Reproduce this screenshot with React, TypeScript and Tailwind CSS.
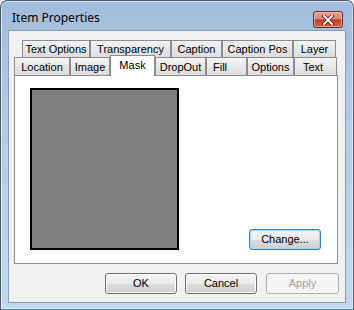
import React from "react";

type Tab = { label: string; w: string; selected?: boolean; pad?: string };

const backRow: Tab[] = [
  { label: "Text Options", w: "w-[68px]" },
  { label: "Transparency", w: "w-[81px]" },
  { label: "Caption", w: "w-[51px]" },
  { label: "Caption Pos", w: "w-[71px]" },
  { label: "Layer", w: "w-[43px]" },
];

const frontRow: Tab[] = [
  { label: "Location", w: "w-[56px]" },
  { label: "Image", w: "w-[40px]" },
  { label: "Mask", w: "w-[45px]", selected: true },
  { label: "DropOut", w: "w-[51px]" },
  { label: "Fill", w: "w-[41px]", pad: "justify-start pl-[6px]" },
  { label: "Options", w: "w-[47px]" },
  { label: "Text", w: "w-[43px]", pad: "justify-start pl-[8px]" },
];

function TabButton({ tab, h }: { tab: Tab; h: string }) {
  if (tab.selected) {
    return (
      <div
        className={`${tab.w} relative z-10 -mt-[2px] h-[21px] border border-b-0 border-[#898c95] bg-white flex items-start justify-center pt-[2px] text-[11px] leading-[14px] text-black`}
      >
        {tab.label}
      </div>
    );
  }
  return (
    <div
      className={`${tab.w} ${h} border border-b-0 border-[#898c95] bg-gradient-to-b from-[#f3f3f3] to-[#dcdcdc] flex items-center ${
        tab.pad ?? "justify-center"
      } text-[11px] leading-[14px] text-black`}
    >
      {tab.label}
    </div>
  );
}

function Button({
  label,
  w,
  focused,
  disabled,
}: {
  label: string;
  w: string;
  focused?: boolean;
  disabled?: boolean;
}) {
  if (disabled) {
    return (
      <div
        className={`${w} h-[21px] rounded-[3px] border border-[#adb2b5] bg-[#f4f4f4] flex items-center justify-center text-[11px] text-[#a0a0a0]`}
      >
        {label}
      </div>
    );
  }
  return (
    <div
      className={`${w} h-[21px] rounded-[3px] border ${
        focused ? "border-[#3c7fb1] shadow-[inset_0_0_0_1px_#9fd6f5]" : "border-[#707070] shadow-[inset_0_0_0_1px_#fbfbfb]"
      } bg-[linear-gradient(to_bottom,#f2f2f2_0%,#ebebeb_50%,#dddddd_50%,#cfcfcf_100%)] flex items-center justify-center text-[11px] text-black`}
    >
      {label}
    </div>
  );
}

export default function App() {
  return (
    <div className="w-[354px] h-[310px] font-['Liberation_Sans',Arial,sans-serif]">
      <div className="w-[354px] h-[310px] rounded-t-[7px] border border-[#4d5b6c] border-b-[#2f8f9c] bg-gradient-to-b from-[#a2bcdb] via-[#b8cfe9] to-[#c2d7ee] flex flex-col shadow-[inset_0_0_0_1px_rgba(255,255,255,0.5)]">
        {/* title bar */}
        <div className="h-[29px] flex items-center justify-between pl-[11px] pr-[10px]">
          <span className="text-[12px] pt-[5px] font-['Noto_Sans',sans-serif] text-black">Item Properties</span>
          <div className="mt-[8px] w-[30px] h-[17px] rounded-[3px] border border-[#6b2b2b] bg-[linear-gradient(to_bottom,#e8a493_0%,#d7826f_45%,#c2412c_55%,#d2624b_100%)] flex items-center justify-center shadow-[inset_0_0_0_1px_rgba(255,220,210,0.5)]">
            <svg width="12" height="10" viewBox="0 0 12 10">
              <path d="M2 1 L10 9 M10 1 L2 9" stroke="#5a1c14" strokeWidth="3.4" strokeLinecap="square" />
              <path d="M2 1 L10 9 M10 1 L2 9" stroke="#ffffff" strokeWidth="1.8" strokeLinecap="square" />
            </svg>
          </div>
        </div>

        {/* client area */}
        <div className="ml-[7px] w-[338px] h-[273px] bg-[#f0f0f0] border border-[#8a9db4] flex flex-col">
          <div className="pt-[9px] pl-[13px] flex">
            {backRow.map((t) => (
              <TabButton key={t.label} tab={t} h="h-[17px]" />
            ))}
          </div>
          <div className="pl-[5px] flex h-[18px]">
            {frontRow.map((t) => (
              <TabButton key={t.label} tab={t} h="h-[18px]" />
            ))}
          </div>
          <div className="ml-[5px] w-[324px] h-[189px] border border-[#898c95] bg-white flex">
            <div className="mt-[12px] ml-[15px] w-[149px] h-[162px] border-2 border-black bg-[#808080]" />
            <div className="self-end mb-[13px] ml-[70px]">
              <Button label="Change..." w="w-[72px]" focused />
            </div>
          </div>
          <div className="mt-[9px] flex pl-[96px]">
            <Button label="OK" w="w-[72px]" />
            <div className="ml-[8px]">
              <Button label="Cancel" w="w-[72px]" />
            </div>
            <div className="ml-[9px]">
              <Button label="Apply" w="w-[73px]" disabled />
            </div>
          </div>
        </div>
      </div>
    </div>
  );
}
